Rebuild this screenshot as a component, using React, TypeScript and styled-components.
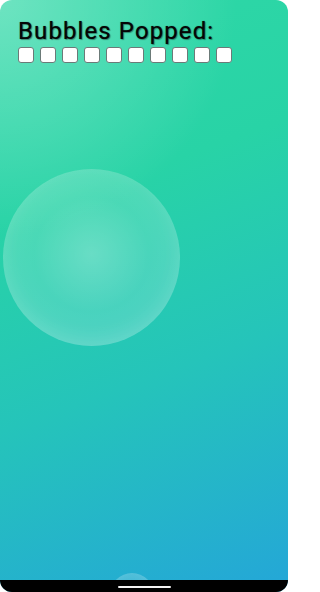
import React from "react";
import styled, { createGlobalStyle } from "styled-components";

const Global = createGlobalStyle`
  html, body { margin: 0; padding: 0; background: #ffffff; }
  body { width: 288px; height: 592px; overflow: hidden; font-family: Roboto, "Noto Sans", sans-serif; }
  #root { width: 288px; height: 592px; }
`;

const Screen = styled.div`
  position: relative;
  width: 288px;
  height: 592px;
  border-radius: 12px;
  overflow: hidden;
  display: flex;
  flex-direction: column;
  background:
    radial-gradient(circle at 0% 0%, rgba(255, 255, 255, 0.3) 0%, rgba(255, 255, 255, 0) 36%),
    linear-gradient(160deg, #2fd8a6 0%, #28d3a6 32%, #25c4ba 62%, #24a6d8 100%);
`;

const Playfield = styled.main`
  position: relative;
  flex: 1;
  padding: 17px 18px 0;
`;

const Title = styled.h1`
  margin: 0;
  font-family: Roboto, "Noto Sans", sans-serif;
  font-weight: 400;
  font-size: 24px;
  line-height: 28px;
  color: #050505;
  text-shadow: 1px 1px 1px rgba(0, 0, 0, 0.35), 0 0 1px rgba(0, 0, 0, 0.6);
  letter-spacing: 1.1px;
`;

const Tally = styled.div`
  display: flex;
  gap: 6px;
  margin-top: 2px;
`;

const Slot = styled.div<{ $filled?: boolean }>`
  width: 14px;
  height: 14px;
  border: 1px solid #6b7a78;
  border-radius: 3px;
  background: ${(p) => (p.$filled ? "#2a9fd8" : "#ffffff")};
`;

const Bubble = styled.div<{ $size: number }>`
  position: absolute;
  width: ${(p) => p.$size}px;
  height: ${(p) => p.$size}px;
  border-radius: 50%;
  background:
    radial-gradient(circle at 50% 48%, rgba(255, 255, 255, 0.3) 0%, rgba(255, 255, 255, 0.16) 45%, rgba(255, 255, 255, 0.2) 75%, rgba(255, 255, 255, 0.3) 100%);
  box-shadow: inset 0 -6px 18px rgba(255, 255, 255, 0.12);
`;

const NavBar = styled.footer`
  height: 12px;
  background: #000000;
  display: flex;
  align-items: center;
  justify-content: center;
  position: relative;
  z-index: 2;
`;

const HomeIndicator = styled.div`
  width: 53px;
  height: 2px;
  border-radius: 1px;
  background: #f2f2f2;
  margin-top: 1px;
`;

export default function App() {
  const slots = Array.from({ length: 10 }, (_, i) => i);
  return (
    <>
      <Global />
      <Screen>
        <Playfield>
          <Title>Bubbles Popped:</Title>
          <Tally>
            {slots.map((i) => (
              <Slot key={i} />
            ))}
          </Tally>
          <Bubble $size={177} style={{ left: 3, top: 169 }} />
          <Bubble $size={44} style={{ left: 110, top: 573 }} />
        </Playfield>
        <NavBar>
          <HomeIndicator />
        </NavBar>
      </Screen>
    </>
  );
}
